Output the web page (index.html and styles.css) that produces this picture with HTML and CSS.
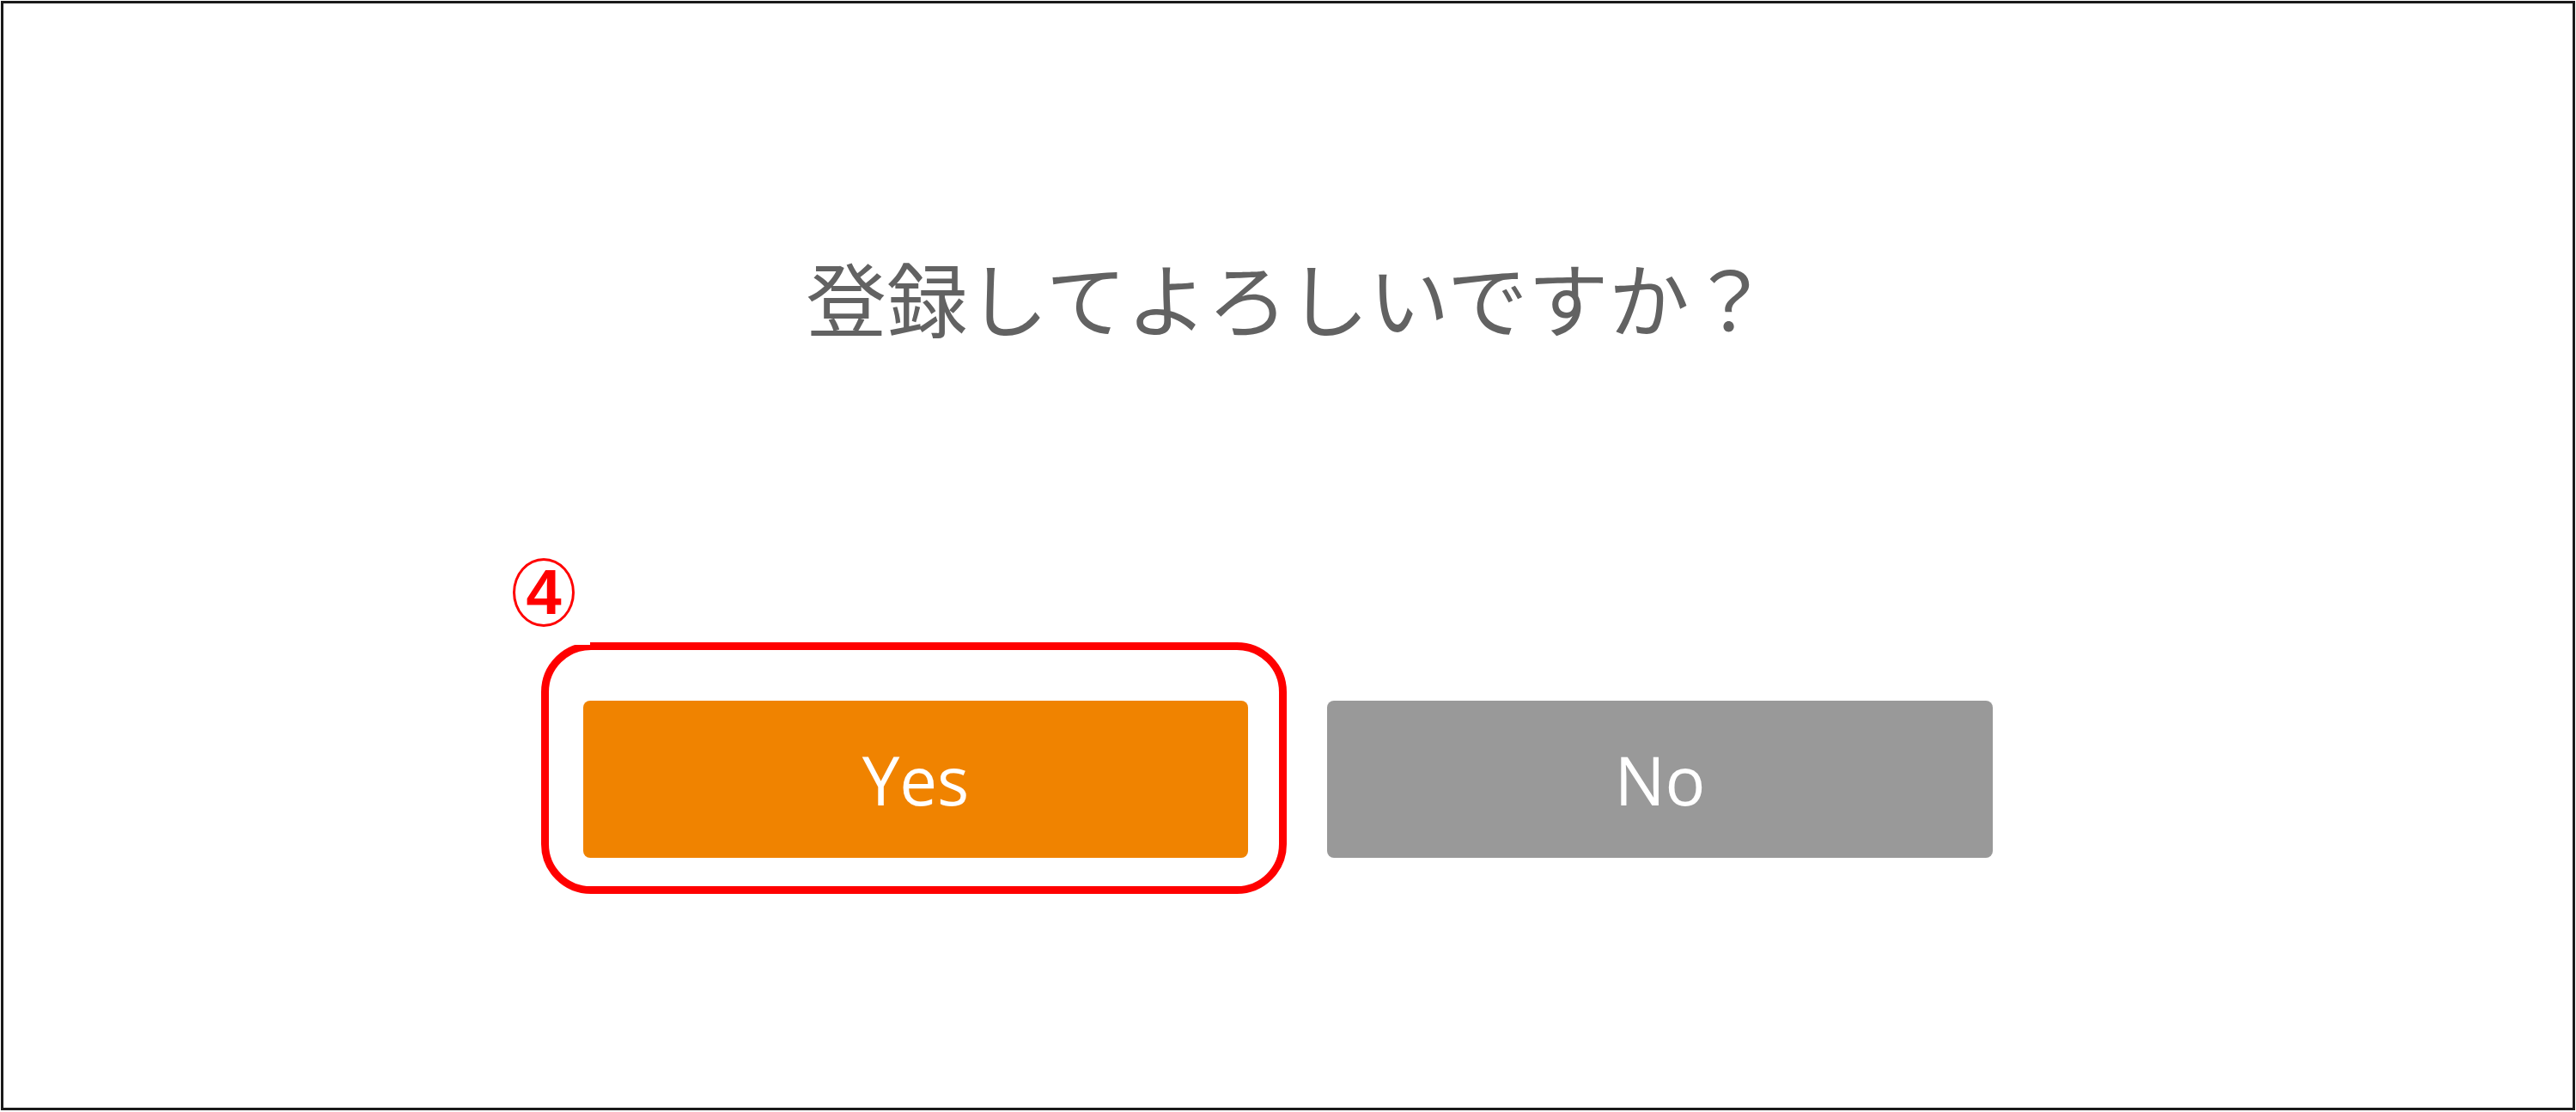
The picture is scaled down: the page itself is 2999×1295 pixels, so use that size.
FILE: index.html
```html
<!DOCTYPE html>
<html lang="ja">
<head>
<meta charset="utf-8">
<title>登録確認</title>
<link rel="stylesheet" href="styles.css">
</head>
<body>
<div class="frame">
  <p class="question">登録してよろしいですか？</p>
  <div class="actions">
    <div class="yes-wrap">
      <span class="step-badge">4</span>
      <span class="highlight"></span>
      <button class="btn btn-yes" type="button">Yes</button>
    </div>
    <button class="btn btn-no" type="button">No</button>
  </div>
</div>
</body>
</html>
```
FILE: styles.css
```css
html, body {
  margin: 0;
  padding: 0;
  background: #ffffff;
}

.frame {
  margin: 1px;
  height: 1292px;
  box-sizing: border-box;
  border: 3px solid #1a1a1a;
  display: flex;
  flex-direction: column;
  align-items: center;
}

.question {
  margin: 294px 0 0;
  font-family: "Noto Sans CJK JP", "Noto Sans", sans-serif;
  font-weight: 400;
  font-size: 94px;
  line-height: 1;
  color: #626262;
  white-space: nowrap;
}

.actions {
  display: flex;
  gap: 92px;
  margin-top: 424px;
}

.yes-wrap {
  position: relative;
  display: flex;
}

.btn {
  width: 774px;
  height: 183px;
  padding: 0;
  border: 0;
  border-radius: 8px;
  color: #ffffff;
  font-family: "Open Sans", "Noto Sans", sans-serif;
  font-weight: 400;
  font-size: 78px;
  line-height: 1;
  cursor: pointer;
}

.btn-yes {
  background: #f08300;
}

.btn-no {
  width: 775px;
  background: #999999;
}

.highlight {
  position: absolute;
  left: -49px;
  top: -68px;
  right: -45px;
  bottom: -42px;
  border: 9px solid #ff0000;
  border-radius: 58px;
  pointer-events: none;
}

/* small notch where the hand-drawn outline's top edge meets the left arc */
.highlight::before {
  content: "";
  position: absolute;
  top: -10px;
  left: 24px;
  width: 24px;
  height: 4px;
  background: #ffffff;
}

.step-badge {
  position: absolute;
  left: -82px;
  top: -166px;
  width: 72px;
  height: 80px;
  box-sizing: border-box;
  border: 3px solid #ff0000;
  border-radius: 50%;
  display: flex;
  align-items: center;
  justify-content: center;
  color: #ff0000;
  font-family: "Liberation Sans", Arial, sans-serif;
  font-weight: 700;
  font-size: 74px;
  line-height: 1;
}
```
